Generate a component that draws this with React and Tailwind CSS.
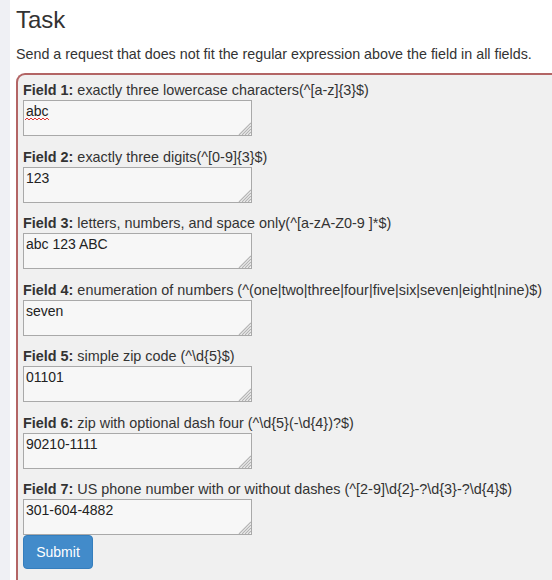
const fields = [
  { label: 'Field 1:', hint: ' exactly three lowercase characters(^[a-z]{3}$)', value: 'abc', typo: true },
  { label: 'Field 2:', hint: ' exactly three digits(^[0-9]{3}$)', value: '123' },
  { label: 'Field 3:', hint: ' letters, numbers, and space only(^[a-zA-Z0-9 ]*$)', value: 'abc 123 ABC' },
  { label: 'Field 4:', hint: ' enumeration of numbers (^(one|two|three|four|five|six|seven|eight|nine)$)', value: 'seven' },
  { label: 'Field 5:', hint: ' simple zip code (^\\d{5}$)', value: '01101' },
  { label: 'Field 6:', hint: ' zip with optional dash four (^\\d{5}(-\\d{4})?$)', value: '90210-1111' },
  { label: 'Field 7:', hint: ' US phone number with or without dashes (^[2-9]\\d{2}-?\\d{3}-?\\d{4}$)', value: '301-604-4882' },
];

// red spellcheck squiggle drawn over the first textarea
function Squiggle() {
  return (
    <svg className="pointer-events-none absolute left-[2px] top-[17px]" width="24" height="4" viewBox="0 0 24 4">
      <path d="M0 3 L2 1 L4 3 L6 1 L8 3 L10 1 L12 3 L14 1 L16 3 L18 1 L20 3 L22 1 L24 3" fill="none" stroke="#e03030" strokeWidth="1" />
    </svg>
  );
}

// hatched resize grip in the textarea corner
function Grip() {
  return (
    <svg className="pointer-events-none absolute bottom-[1px] right-[1px]" width="13" height="13" viewBox="0 0 13 13">
      <g stroke="#b4b4b4" strokeWidth="1.2">
        <line x1="13" y1="1" x2="1" y2="13" />
        <line x1="13" y1="4" x2="4" y2="13" />
        <line x1="13" y1="7" x2="7" y2="13" />
        <line x1="13" y1="10" x2="10" y2="13" />
      </g>
    </svg>
  );
}

function Field({ label, hint, value, last, typo }) {
  return (
    <div className={last ? '' : 'mb-[10.5px]'}>
      <label className="block h-5 text-[14.4px] leading-5">
        <span className="font-bold">{label}</span>
        {hint}
      </label>
      <div className="relative w-[229px]">
        <textarea
          defaultValue={value}
          spellCheck={false}
          className="block h-9 w-[229px] resize-none border border-[#a9a9a9] bg-[#f7f7f7] px-[2px] pt-[2px] pb-0 text-[14px] leading-[17px] text-[#222] outline-none"
        />
        <Grip />
        {typo && <Squiggle />}
      </div>
    </div>
  );
}

export default function App() {
  return (
    <div className="flex h-[580px] w-[552px] overflow-hidden bg-white font-['Liberation_Sans',Arial,sans-serif] text-[#333]">
      <div className="w-[10px] shrink-0 bg-[#eff0f4]" />
      <div className="flex-1 pl-[6px] pt-[5px]">
        <h1 className="text-[24px] leading-[30px]">Task</h1>
        <p className="mt-[9px] text-[14.3px] leading-5">
          Send a request that does not fit the regular expression above the field in all fields.
        </p>
        <form className="mt-[9px] w-[560px] rounded-tl-[9px] border-l-2 border-t-2 border-[#b36565] bg-[#f0f0f0] pl-[5px] pt-[5px] pb-6">
          {fields.map((f, i) => (
            <Field key={i} {...f} last={i === fields.length - 1} />
          ))}
          <button
            type="button"
            className="block h-[34px] w-[70px] rounded-[4px] border border-[#357ebd] bg-[#428bca] text-[14px] text-white"
          >
            Submit
          </button>
        </form>
      </div>
    </div>
  );
}
